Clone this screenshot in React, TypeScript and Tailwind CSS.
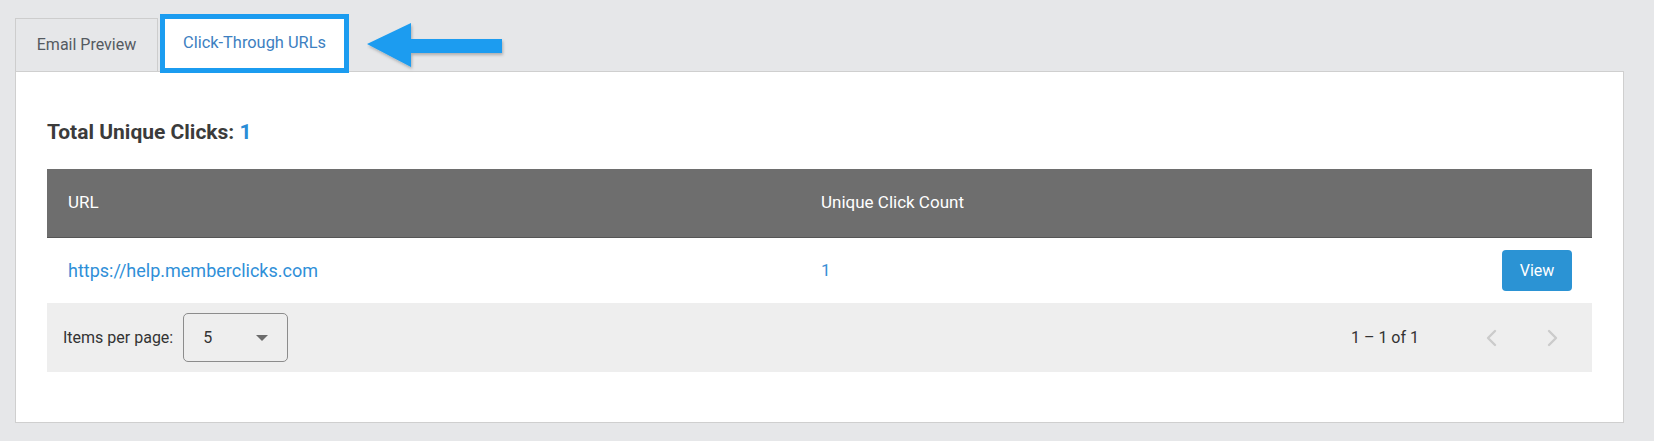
import { useState } from 'react';

const rows = [{ url: 'https://help.memberclicks.com', clicks: 1 }];

function Chevron({ dir }: { dir: 'left' | 'right' }) {
    return (
        <svg width="16" height="18" viewBox="0 0 16 18" fill="none">
            <polyline
                points={dir === 'left' ? '11,2 4,9 11,16' : '5,2 12,9 5,16'}
                stroke="#cbcbcb"
                strokeWidth="2.4"
                strokeLinecap="round"
                strokeLinejoin="round"
            />
        </svg>
    );
}

function CalloutArrow() {
    return (
        <svg className="absolute left-[352px] top-[9px]" width="150" height="52" viewBox="0 0 150 52">
            <defs>
                <filter id="arrow-shadow" x="-10%" y="-20%" width="130%" height="150%">
                    <feDropShadow dx="1" dy="2" stdDeviation="1.5" floodColor="#000" floodOpacity="0.25" />
                </filter>
            </defs>
            <polygon
                points="0,21 44,0 44,16 135,16 135,30 44,30 44,44"
                fill="#1b9cf0"
                filter="url(#arrow-shadow)"
            />
        </svg>
    );
}

export default function App() {
    const [perPage] = useState(5);

    return (
        <div className="h-[441px] w-full bg-[#e6e7e9] pl-[15px] pt-[14px] font-['Roboto',sans-serif]">
            <div className="relative flex h-[57px] w-[1609px] items-end">
                <div className="flex h-[53px] w-[143px] items-center justify-center border border-b-0 border-[#cdcdcd] text-[16px] text-[#555a61]">
                    Email Preview
                </div>
                <div className="relative z-10 -mb-[2px] ml-[2px] flex h-[59px] w-[189px] items-center justify-center border-[5px] border-[#1b9cf0] bg-white text-[16.4px] text-[#3d7fc1]">
                    Click-Through URLs
                </div>
                <CalloutArrow />
            </div>

            <div className="h-[352px] w-[1609px] border border-[#cfcfcf] bg-white px-[31px] pt-[48px]">
                <h2 className="text-[21px] font-bold leading-[24px] text-[#3b3b3b]">
                    Total Unique Clicks: <span className="text-[#2a8dd6]">{rows.length}</span>
                </h2>

                <div className="mt-[25px]">
                    <div className="flex h-[69px] items-center border-b border-[#555] bg-[#6e6e6e] pl-[21px] text-[17px] text-white">
                        <div className="w-[753px]">URL</div>
                        <div>Unique Click Count</div>
                    </div>
                    {rows.map((row) => (
                        <div key={row.url} className="flex h-[65px] items-center pl-[21px] pr-[20px]">
                            <a className="w-[753px] text-[18px] text-[#2f8fd8]" href="#">
                                {row.url}
                            </a>
                            <div className="flex-1 text-[17px] text-[#3a8fd5]">{row.clicks}</div>
                            <button className="h-[41px] w-[70px] rounded-[4px] bg-[#2b93d4] text-[16px] text-white">
                                View
                            </button>
                        </div>
                    ))}
                    <div className="flex h-[69px] items-center bg-[#eeeeee] pl-[16px] pr-[20px] text-[16px] text-[#333]">
                        <span>Items per page:</span>
                        <div className="ml-[10px] flex h-[49px] w-[105px] items-center rounded-[5px] border border-[#8c8c8c] pl-[19px] pr-[19px]">
                            <span className="flex-1">{perPage}</span>
                            <span className="h-0 w-0 border-x-[6px] border-t-[6px] border-x-transparent border-t-[#6b6b6b]" />
                        </div>
                        <div className="flex-1" />
                        <span>1 – 1 of 1</span>
                        <div className="ml-[53px] flex gap-[20px]">
                            <button className="flex h-[40px] w-[40px] items-center justify-center">
                                <Chevron dir="left" />
                            </button>
                            <button className="flex h-[40px] w-[40px] items-center justify-center">
                                <Chevron dir="right" />
                            </button>
                        </div>
                    </div>
                </div>
            </div>
        </div>
    );
}
